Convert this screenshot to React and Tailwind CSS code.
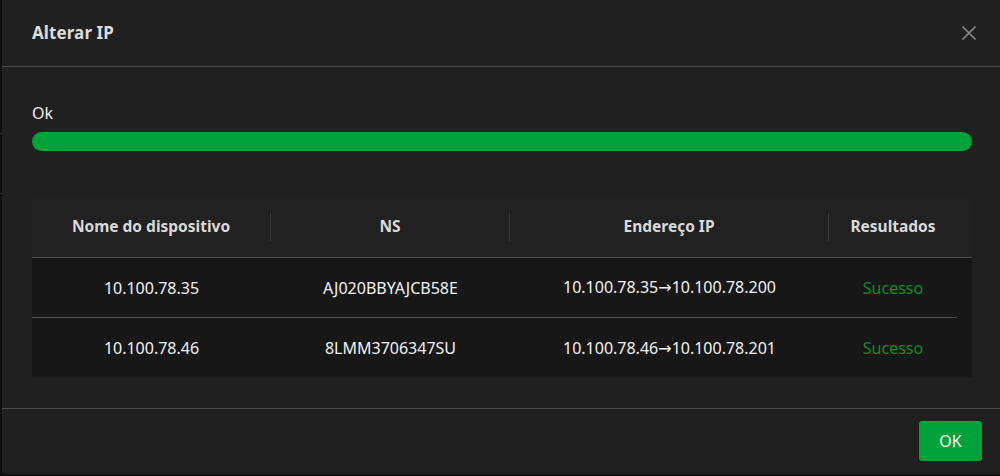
import React from "react";

const rows = [
  { name: "10.100.78.35", ns: "AJ020BBYAJCB58E", from: "10.100.78.35", to: "10.100.78.200", res: "Sucesso" },
  { name: "10.100.78.46", ns: "8LMM3706347SU", from: "10.100.78.46", to: "10.100.78.201", res: "Sucesso" },
];

export default function App() {
  return (
    <div className="w-[1000px] h-[476px] bg-[#0e0f0e] overflow-hidden relative" style={{ fontFamily: '"Segoe UI", "Noto Sans", "Open Sans", sans-serif' }}>
      <div className="absolute left-0 top-[133px] w-[2px] h-px bg-[#2a2a2a]" />
      <div className="absolute left-0 top-[193px] w-[2px] h-px bg-[#2a2a2a]" />
      <div className="ml-[2px] w-[1000px] h-[474px] bg-[#202020] rounded-b-[4px] flex flex-col">
        <div className="h-[67px] flex items-center justify-between pl-[30px] pr-[25px] border-b border-[#4b4b50]">
          <span className="text-[17px] font-bold text-[#dcdcdc] -mt-[1px] tracking-[0.1px]">Alterar IP</span>
          <svg width="16" height="16" viewBox="0 0 16 16" className="text-[#8a8a8a] -mt-[1px]">
            <path d="M1.5 1.5 L14.5 14.5 M14.5 1.5 L1.5 14.5" stroke="currentColor" strokeWidth="1.6" />
          </svg>
        </div>
        <div className="pl-[30px] pr-[30px] pt-[34px]">
          <div className="text-[16px] text-[#f0f0f0] leading-[24px]">Ok</div>
          <div className="mt-[7px] h-[19px] w-[940px] rounded-full bg-[#00a33a]" />
          <div className="mt-[46px] w-[940px] bg-[#171717] rounded-b-[3px]">
            <div className="flex h-[61px] items-center bg-[#212121] border-b border-[#4b4b50] text-[15.5px] font-bold text-[#d9d9d9]">
              <div className="w-[238px] text-center">Nome do dispositivo</div>
              <div className="w-px h-[28px] bg-[#3a3a3a]" />
              <div className="w-[238px] text-center">NS</div>
              <div className="w-px h-[28px] bg-[#3a3a3a]" />
              <div className="w-[318px] text-center">Endereço IP</div>
              <div className="w-px h-[28px] bg-[#3a3a3a]" />
              <div className="w-[128px] text-center">Resultados</div>
              <div className="w-[15px]" />
            </div>
            {rows.map((r, i) => (
              <div key={i} className={`flex h-[60px] items-center w-[925px] text-[16px] text-[#f2f2f2] ${i === 0 ? "border-b border-[#4b4b50]" : ""}`}>
                <div className="w-[239px] text-center">{r.name}</div>
                <div className="w-[239px] text-center">{r.ns}</div>
                <div className="w-[319px] text-center">
                  {r.from}
                  <span className="text-[16px]" style={{ fontFamily: '"DejaVu Sans", sans-serif' }}>→</span>
                  {r.to}
                </div>
                <div className="w-[128px] text-center text-[#0b8f1f]">{r.res}</div>
              </div>
            ))}
          </div>
        </div>
        <div className="mt-[30px] border-t border-[#4b4b50] h-[66px] flex items-center justify-end pr-[20px]">
          <button className="w-[63px] h-[40px] rounded-[3px] bg-[#00a33a] text-white text-[16px] -mt-[2px]">OK</button>
        </div>
      </div>
    </div>
  );
}
